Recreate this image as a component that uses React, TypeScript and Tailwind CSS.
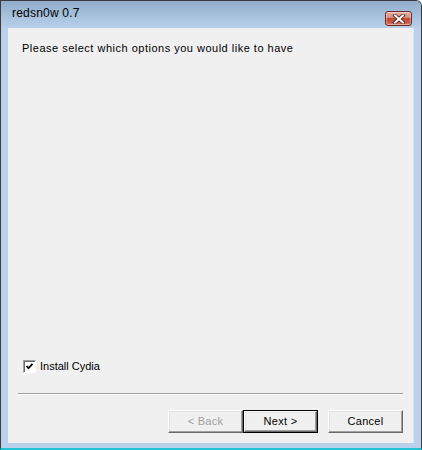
import React from "react";

const font = { fontFamily: '"Liberation Sans", Arial, sans-serif' };

function CloseButton() {
  return (
    <div className="absolute left-[384px] top-[10px] w-[27px] h-[15px] rounded-[3px] border border-[#6b2b24] overflow-hidden bg-[linear-gradient(to_bottom,#e4b2a8_0%,#d88a7c_45%,#c14a36_50%,#c75b45_80%,#d9826c_100%)] shadow-[inset_0_0_0_1px_rgba(255,255,255,0.35)] flex items-center justify-center">
      <svg width="14" height="10" viewBox="0 0 14 10">
        <path d="M3 1.5 L11 8.5 M11 1.5 L3 8.5" stroke="#4a1b16" strokeWidth="3.6" strokeLinecap="square" />
        <path d="M3 1.5 L11 8.5 M11 1.5 L3 8.5" stroke="#ffffff" strokeWidth="2" strokeLinecap="square" />
      </svg>
    </div>
  );
}

function WinButton({ label, disabled, isDefault }: { label: string; disabled?: boolean; isDefault?: boolean }) {
  const inner = (
    <div
      className={
        "w-full h-full flex items-center justify-center text-[11px] tracking-[0.3px] bg-[#f0f0f0] border-t border-l border-t-white border-l-white border-b border-r border-b-[#696969] border-r-[#696969] shadow-[inset_-1px_-1px_0_#a0a0a0,inset_1px_1px_0_#e3e3e3] " +
        (disabled ? "text-[#a0a0a0]" : "text-black")
      }
      style={font}
    >
      {label}
    </div>
  );
  if (isDefault) {
    return <div className="w-[75px] h-[23px] border border-[#000000]">{inner}</div>;
  }
  return <div className="w-[75px] h-[23px]">{inner}</div>;
}

export default function App() {
  return (
    <div className="w-[422px] h-[450px] relative bg-[#b9d1ea] flex flex-col border-t border-l border-r border-[#3c3c3c] border-b-2 border-b-[#1fc3d4] rounded-tr-[6px] overflow-hidden">
      <div className="h-[27px] shrink-0 bg-[linear-gradient(to_bottom,#91adcb,#b8d0ea)] flex items-center pl-[11px] pb-[3px]">
        <span className="text-[12px] text-black tracking-[0.2px]" style={font}>
          redsn0w 0.7
        </span>
      </div>
      <CloseButton />
      <div className="flex-1 flex px-[7px] pb-[5px]">
        <div className="flex-1 w-[405px] bg-[#f0f0f0] flex flex-col border-r border-[#d8e6f4]">
          <div className="pl-[14px] pt-[14px] text-[11px] tracking-[0.5px] text-black leading-[13px]" style={font}>
            Please select which options you would like to have
          </div>
          <div className="flex-1" />
          <div className="flex items-center pl-[15px] h-[13px]">
            <div className="w-[13px] h-[13px] border border-[#a0a0a0] border-b-white border-r-white bg-white flex items-center justify-center shadow-[inset_1px_1px_0_#696969]">
              <svg width="9" height="9" viewBox="0 0 9 9">
                <path d="M1.5 4 L3.5 6.2 L7.5 1.8" stroke="#000" strokeWidth="1.8" fill="none" />
              </svg>
            </div>
            <span className="ml-[4px] text-[11px] text-black" style={font}>
              Install Cydia
            </span>
          </div>
          <div className="mx-[10px] mt-[20px] h-[2px] border-t border-t-[#a0a0a0] border-b border-b-white" />
          <div className="flex justify-end pr-[10px] mt-[15px] mb-[10px]">
            <WinButton label="< Back" disabled />
            <WinButton label="Next >" isDefault />
            <div className="w-[10px]" />
            <WinButton label="Cancel" />
          </div>
        </div>
      </div>
    </div>
  );
}
